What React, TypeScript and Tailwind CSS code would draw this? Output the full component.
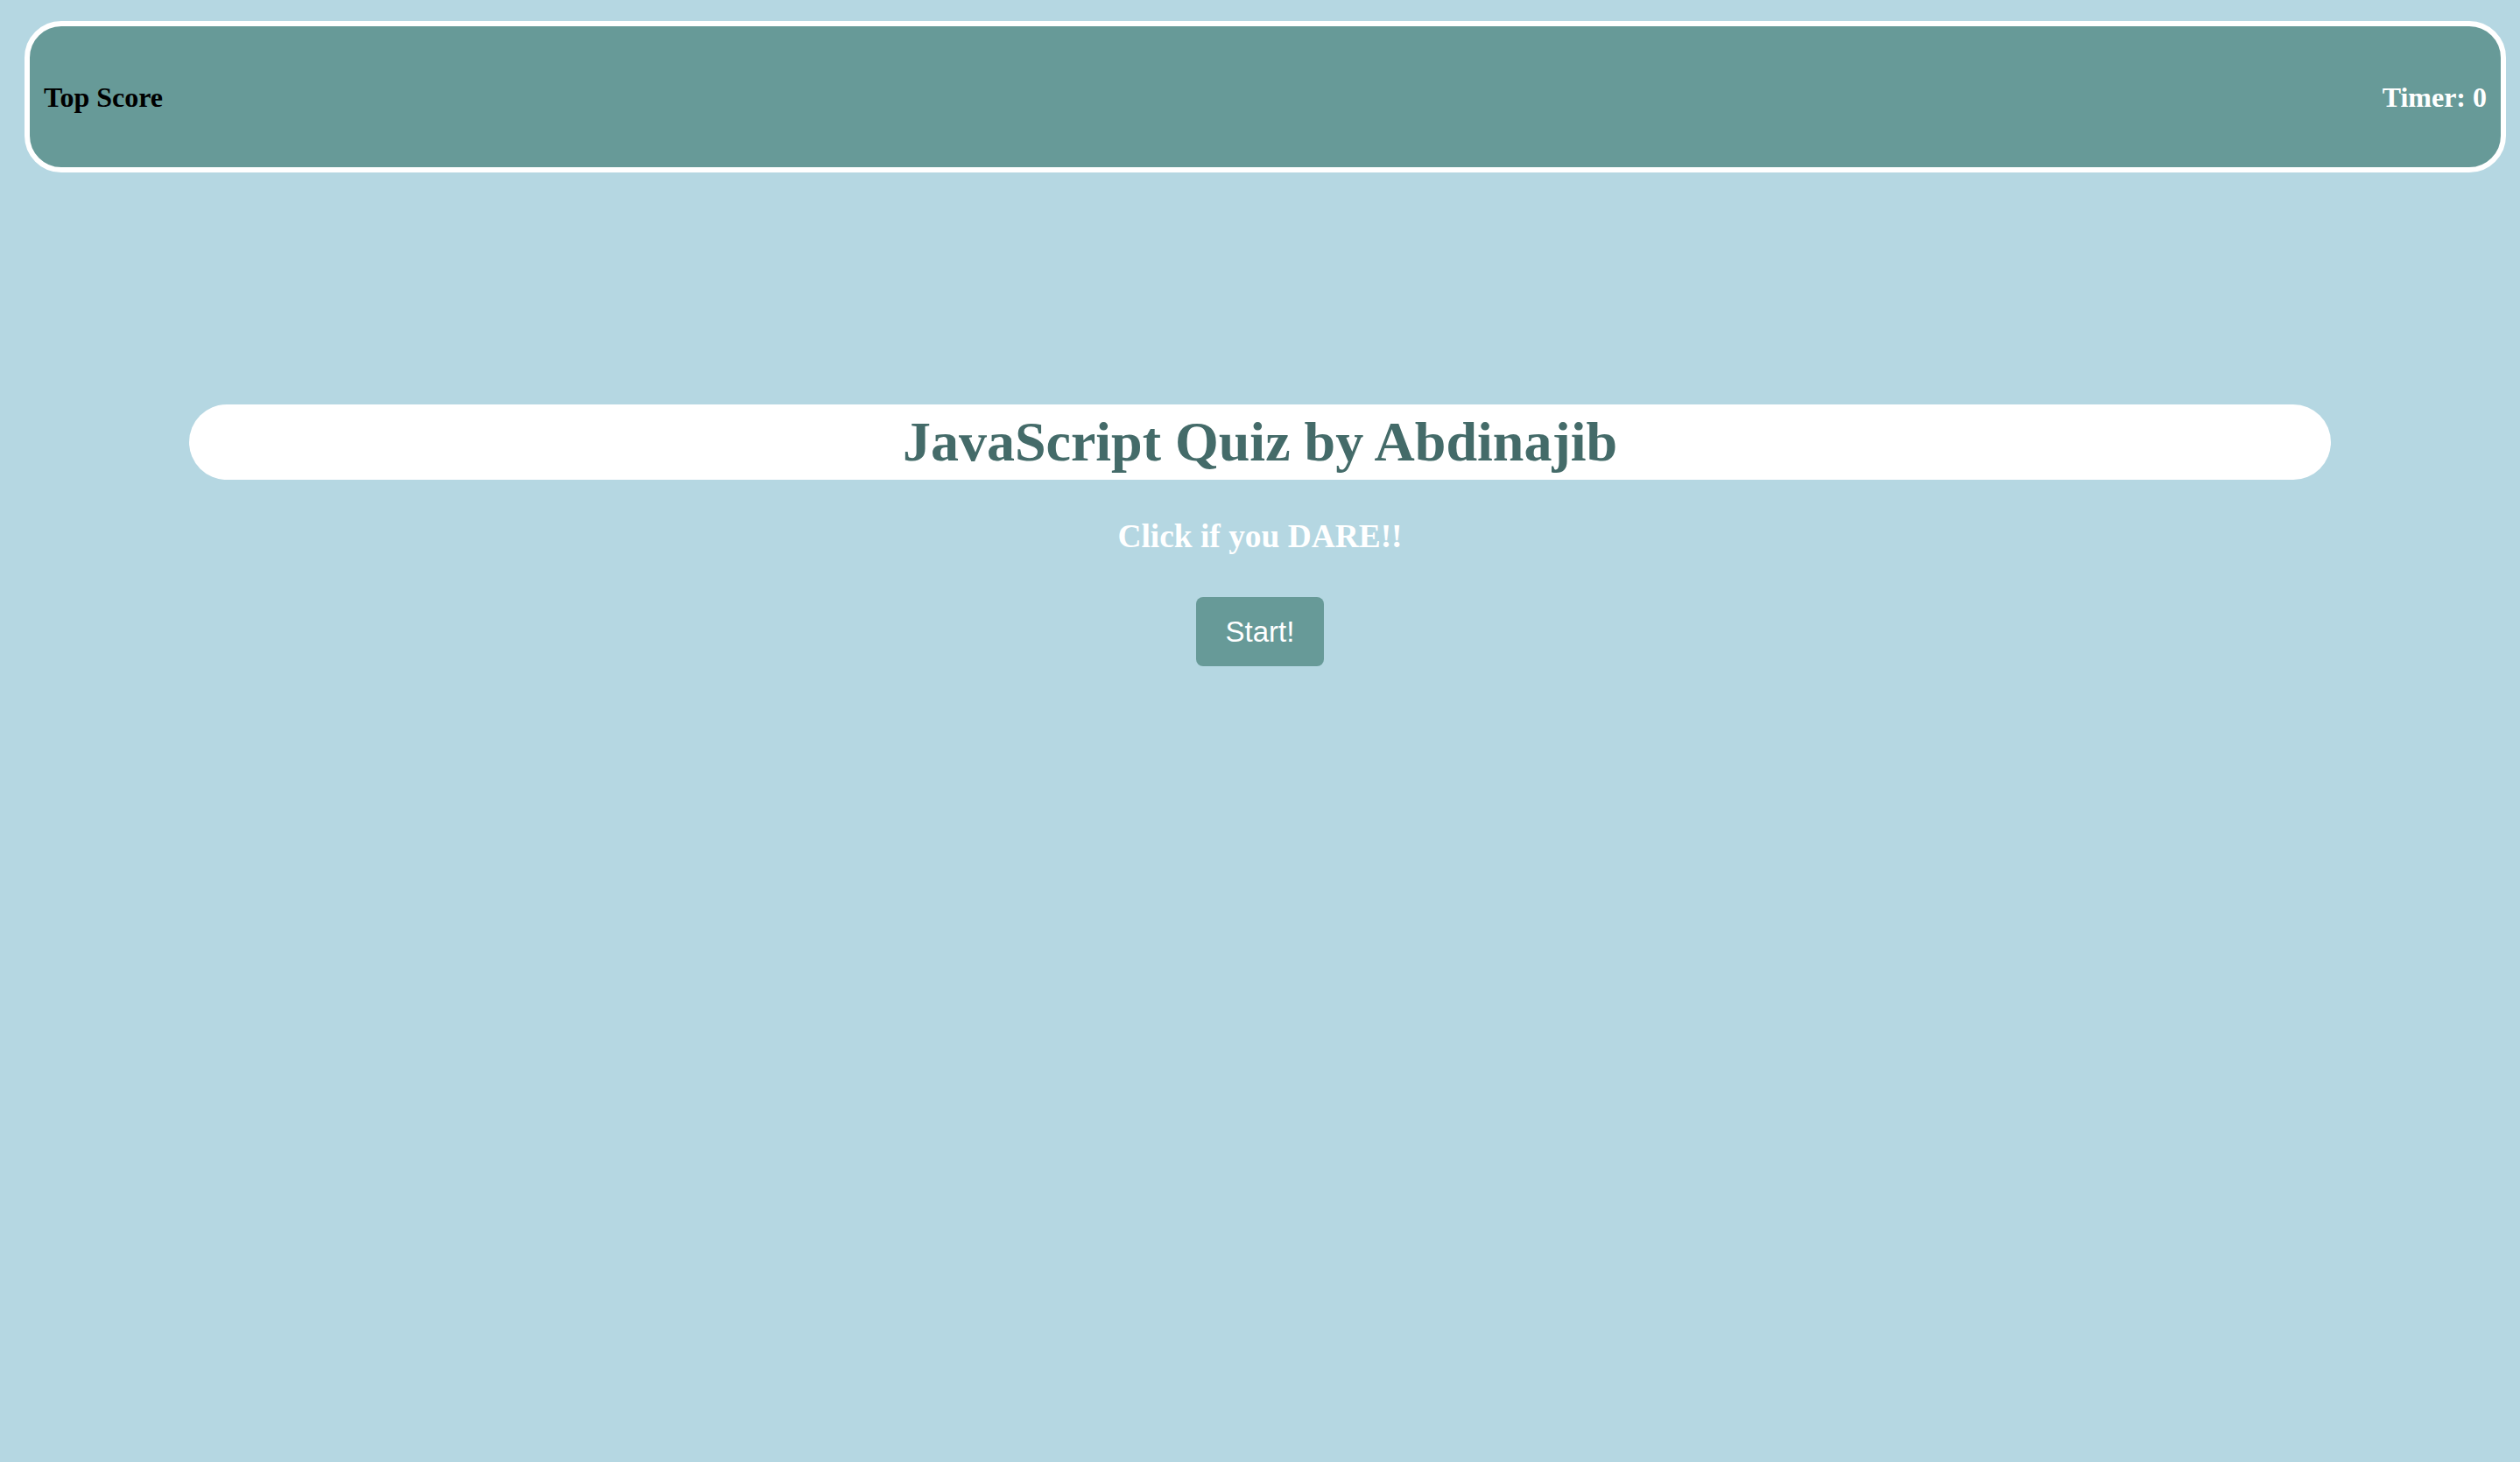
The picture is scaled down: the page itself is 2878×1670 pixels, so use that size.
import React from "react";

function App() {
  const [timer] = React.useState(0);

  return (
    <div className="min-h-screen w-full bg-[#b5d7e2] pt-[24px] font-['Liberation_Serif',serif]">
      <header className="ml-[28px] mr-[16px] h-[173px] flex items-center justify-between border-[6px] border-white rounded-[42px] bg-[#679a98] px-[16px]">
        <div className="text-[32px] font-bold text-black">Top Score</div>
        <div className="text-[32px] font-bold text-white">Timer: {timer}</div>
      </header>

      <main className="flex flex-col items-center">
        <div className="mt-[265px] w-[85%] h-[86px] flex items-center justify-center bg-white rounded-[43px]">
          <h1 className="text-[64px] font-bold text-[#446b69]">
            JavaScript Quiz by Abdinajib
          </h1>
        </div>
        <h3 className="mt-[37px] text-[37.4px] font-bold text-white">
          Click if you DARE!!
        </h3>
        <button
          type="button"
          className="mt-[41px] w-[146px] h-[79px] rounded-[8px] bg-[#679a98] text-white text-[33px] font-['Liberation_Sans',sans-serif]"
        >
          Start!
        </button>
      </main>
    </div>
  );
}

export default App;
